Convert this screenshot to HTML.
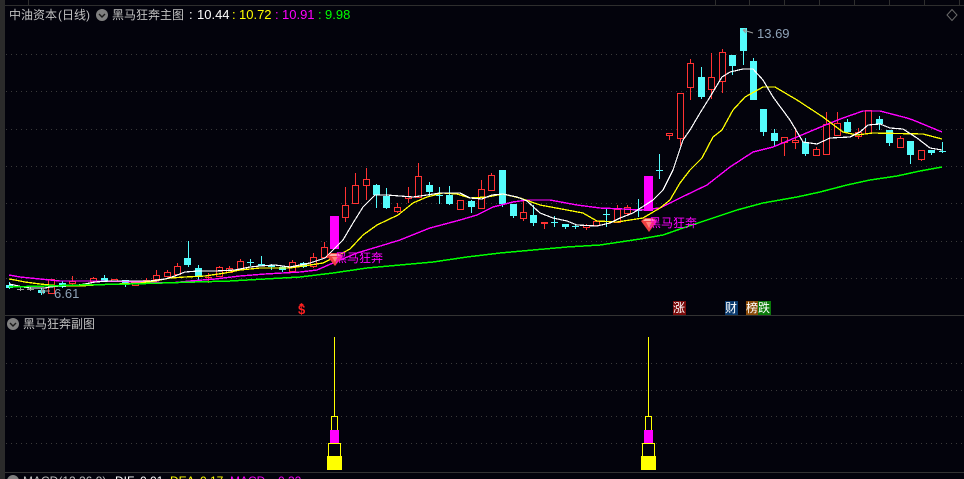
<!DOCTYPE html>
<html><head><meta charset="utf-8"><style>
html,body{margin:0;padding:0;background:#03030c;width:964px;height:479px;overflow:hidden}
svg{display:block}
text{font-family:"Liberation Sans","Noto Sans CJK SC",sans-serif;font-size:12px}
.n{font-size:13px}
</style></head><body>
<svg width="964" height="479" viewBox="0 0 964 479" xmlns="http://www.w3.org/2000/svg">
<rect width="964" height="479" fill="#03030c"/>
<rect width="5" height="479" fill="#2b2b2b"/>
<g shape-rendering="crispEdges">
<rect x="5" y="5" width="959" height="1" fill="#2e2e2e"/>
<rect x="5" y="315" width="959" height="1" fill="#333"/>
<rect x="5" y="472" width="959" height="1" fill="#333"/>
<path d="M28.5 0V5M715.5 0V5M749.5 0V5M784.5 0V5M819.5 0V5M854.5 0V5M889.5 0V5M924.5 0V5M959.5 0V5" stroke="#2e2e2e"/>
<path d="M6 54.5H964M6 91.5H964M6 129.5H964M6 166.5H964M6 203.5H964M6 241.5H964M6 278.5H964M6 363.5H964M6 390.5H964M6 416.5H964M6 443.5H964" stroke="#3a3a3a" stroke-dasharray="1 4"/>

<!-- red wicks -->
<path stroke="#ff3232" fill="none" d="M72.5 276V285M93.5 277V282M146.5 278V284M156.5 270V280M167.5 270V277M177.5 263V275M208.5 273V283M205 277.5H212M219.5 266V277M229.5 266V273M240.5 259V270M292.5 260V272M313.5 253V268M324.5 242V258M345.5 187V222M355.5 173V204M366.5 168V200M397.5 203V213M408.5 187V203M418.5 163V198M481.5 180V209M491.5 173V191M523.5 200V221M544.5 222V229M586.5 224V230M596.5 220V226M617.5 205V223M627.5 205V216M669.5 133V140M680.5 93V146M690.5 59V100M711.5 53V99M722.5 49V93M784.5 137V156M795.5 128V149M816.5 147V156M826.5 112V155M837.5 112V136M858.5 128V139M868.5 110V134M900.5 136V148M921.5 150V161"/>
<!-- red bodies -->
<g fill="#03030c" stroke="#ff3232">
<rect x="48.5" y="279.5" width="6" height="14"/><rect x="69.5" y="281.5" width="6" height="2"/><rect x="90.5" y="278.5" width="6" height="3"/><rect x="111.5" y="279.5" width="6" height="2"/><rect x="132.5" y="282.5" width="6" height="3"/><rect x="143.5" y="280.5" width="6" height="3"/><rect x="153.5" y="275.5" width="6" height="4"/><rect x="164.5" y="272.5" width="6" height="4"/><rect x="174.5" y="266.5" width="6" height="8"/><rect x="216.5" y="267.5" width="6" height="9"/><rect x="226.5" y="268.5" width="6" height="4"/><rect x="237.5" y="261.5" width="6" height="8"/><rect x="289.5" y="262.5" width="6" height="9"/><rect x="310.5" y="257.5" width="6" height="9"/><rect x="321.5" y="247.5" width="6" height="10"/><rect x="342.5" y="205.5" width="6" height="12"/><rect x="352.5" y="185.5" width="6" height="18"/><rect x="363.5" y="179.5" width="6" height="6"/><rect x="394.5" y="207.5" width="6" height="4"/><rect x="405.5" y="196.5" width="6" height="2"/><rect x="415.5" y="176.5" width="6" height="21"/><rect x="457.5" y="200.5" width="6" height="9"/><rect x="478.5" y="189.5" width="6" height="19"/><rect x="488.5" y="175.5" width="6" height="15"/><rect x="520.5" y="212.5" width="6" height="6"/><rect x="541.5" y="222.5" width="6" height="1"/><rect x="583.5" y="225.5" width="6" height="2"/><rect x="593.5" y="221.5" width="6" height="4"/><rect x="614.5" y="209.5" width="6" height="13"/><rect x="624.5" y="207.5" width="6" height="6"/><rect x="666.5" y="133.5" width="6" height="2"/><rect x="677.5" y="93.5" width="6" height="45"/><rect x="687.5" y="63.5" width="6" height="24"/><rect x="708.5" y="77.5" width="6" height="12"/><rect x="719.5" y="52.5" width="6" height="29"/><rect x="781.5" y="137.5" width="6" height="5"/><rect x="792.5" y="140.5" width="6" height="2"/><rect x="813.5" y="149.5" width="6" height="6"/><rect x="823.5" y="124.5" width="6" height="30"/><rect x="834.5" y="123.5" width="6" height="12"/><rect x="855.5" y="132.5" width="6" height="4"/><rect x="865.5" y="110.5" width="6" height="23"/><rect x="897.5" y="138.5" width="6" height="9"/><rect x="918.5" y="150.5" width="6" height="9"/>
</g>
<!-- cyan wicks -->
<path stroke="#54fcfc" fill="none" d="M9.5 282V289M41.5 288V295M62.5 281V288M104.5 275V281M125.5 280V287M188.5 241V267M198.5 265V280M250.5 259V266M247 262.5H254M261.5 256V266M271.5 264V270M282.5 266V272M303.5 262V268M376.5 184V208M386.5 188V209M429.5 182V196M439.5 187V204M436 195.5H443M449.5 186V205M471.5 200V213M502.5 170V207M513.5 204V218M533.5 205V226M554.5 216V227M551 222.5H558M565.5 224V229M575.5 224V229M572 226.5H579M606.5 209V227M603 214.5H610M638.5 199V217M635 210.5H642M659.5 154V179M656 170.5H663M701.5 67V99M732.5 55V75M743.5 28V65M753.5 58V100M763.5 109V136M774.5 129V147M805.5 138V156M847.5 119V133M879.5 116V130M889.5 130V146M910.5 141V164M931.5 150V155M942.5 142V153M939 151.5H946"/>
<path stroke="#9a9a9a" fill="none" d="M20.5 287V291M17 289.5H24M30.5 287V291M27 289.5H34"/>
<!-- cyan bodies -->
<g fill="#54fcfc">
<rect x="6" y="285" width="7" height="3"/><rect x="38" y="290" width="7" height="3"/><rect x="59" y="283" width="7" height="4"/><rect x="101" y="278" width="7" height="3"/><rect x="122" y="280" width="7" height="3"/><rect x="184" y="258" width="7" height="7"/><rect x="195" y="268" width="7" height="8"/><rect x="258" y="264" width="7" height="2"/><rect x="268" y="265" width="7" height="2"/><rect x="279" y="267" width="7" height="3"/><rect x="300" y="263" width="7" height="4"/><rect x="373" y="185" width="7" height="10"/><rect x="383" y="196" width="7" height="12"/><rect x="426" y="185" width="7" height="7"/><rect x="446" y="195" width="7" height="9"/><rect x="468" y="201" width="7" height="6"/><rect x="499" y="170" width="7" height="34"/><rect x="510" y="204" width="7" height="12"/><rect x="530" y="215" width="7" height="8"/><rect x="562" y="224" width="7" height="3"/><rect x="698" y="77" width="7" height="20"/><rect x="729" y="55" width="7" height="11"/><rect x="740" y="28" width="7" height="23"/><rect x="750" y="61" width="7" height="39"/><rect x="760" y="109" width="7" height="23"/><rect x="771" y="133" width="7" height="8"/><rect x="802" y="142" width="7" height="12"/><rect x="844" y="122" width="7" height="10"/><rect x="876" y="119" width="7" height="5"/><rect x="886" y="130" width="7" height="13"/><rect x="907" y="141" width="7" height="14"/><rect x="928" y="150" width="7" height="3"/>
</g>
<!-- magenta signal bars -->
<rect x="330" y="216" width="9" height="33" fill="#ff00ff"/>
<rect x="644" y="176" width="9" height="35" fill="#ff00ff"/>
<!-- moving averages -->
<polyline fill="none" stroke="#ff00ff" stroke-width="1.4" points="9,275 20,277 40,279 60,281 100,281 150,282 170,283 190,281 215,279 240,276 265,274 300,272 317,270 333,263 357,253 377,247 400,240 430,228 460,220 477,215 493,207 513,202 527,200 550,200 577,205 600,208 623,209 640,210 660,208 680,198 707,185 730,167 753,152 773,147 797,137 823,126 843,118 863,111 880,111 907,118 913,120 942,132"/>
<polyline fill="none" stroke="#ffff00" stroke-width="1.3" points="9,279 15,280 25,282 40,284 60,286 80,286 95,285 140,283 155,281 170,278 185,277 205,276 225,273 240,270 260,268 290,268 310,265 323,263 335,257 350,249 363,235 377,225 398,215 413,203 427,197 443,193 457,194 470,198 487,197 503,194 520,198 540,205 567,210 583,213 597,221 617,222 630,220 643,218 660,208 670,200 680,183 690,170 702,158 713,137 722,130 733,110 745,97 763,87 775,87 797,100 823,117 843,132 857,135 873,133 923,134 942,139"/>
<polyline fill="none" stroke="#ffffff" stroke-width="1.2" points="9,284 14,285 23,287 30,288 45,288 50,287 60,286 78,285 85,284 95,282 110,281 125,281 150,281 165,279 175,276 185,272 198,271 215,271 235,270 250,267 260,266 275,265 290,267 310,263 325,258 333,250 343,240 353,223 363,207 375,195 387,195 400,196 413,197 427,195 440,193 460,193 470,198 482,199 492,195 503,194 517,197 527,201 540,213 553,218 567,221 577,225 597,226 610,223 620,218 633,213 653,200 663,190 673,170 683,140 690,130 700,113 710,97 722,77 730,72 743,69 753,69 763,80 773,97 790,120 803,142 817,144 830,138 850,137 860,132 868,125 880,124 890,128 903,129 917,138 930,148 942,150"/>
<polyline fill="none" stroke="#00ff00" stroke-width="1.5" points="9,287 80,285 130,284 195,282 230,281 300,277 333,273 367,268 400,265 433,262 467,257 500,253 533,250 567,247 600,245 640,239 663,235 683,228 707,220 737,210 763,203 797,197 820,192 847,185 870,180 897,176 920,171 942,167"/>

<!-- sub chart -->
<g>
<rect x="334" y="337" width="1" height="79" fill="#ffff00"/>
<rect x="331.5" y="416.5" width="6" height="14" fill="#03030c" stroke="#ffff00"/>
<rect x="330" y="430" width="9" height="14" fill="#ff00ff"/>
<rect x="328.5" y="443.5" width="12" height="13" fill="#03030c" stroke="#ffff00"/>
<rect x="327" y="456" width="15" height="14" fill="#ffff00"/>
<rect x="648" y="337" width="1" height="79" fill="#ffff00"/>
<rect x="645.5" y="416.5" width="6" height="14" fill="#03030c" stroke="#ffff00"/>
<rect x="644" y="430" width="9" height="14" fill="#ff00ff"/>
<rect x="642.5" y="443.5" width="12" height="13" fill="#03030c" stroke="#ffff00"/>
<rect x="641" y="456" width="15" height="14" fill="#ffff00"/>
</g>

<!-- tag backgrounds -->
<rect x="673" y="301" width="13" height="14" fill="#7a0a0a"/>
<rect x="725" y="301" width="13" height="14" fill="#0a3a6e"/>
<rect x="746" y="301" width="13" height="14" fill="#8a4a08"/>
<rect x="758" y="301" width="13" height="14" fill="#0a7a0a"/>
</g>

<!-- gems -->
<polygon points="327,256 331,253 339,253 343,256 335,266" fill="#ee4040"/>
<polygon points="331,254 339,254 341,256 329,256" fill="#ffb0a8"/>
<polygon points="332,257 338,257 335,262" fill="#ff8478"/>
<polygon points="641,221 645,218 653,218 657,221 649,232" fill="#ee4040"/>
<polygon points="645,219 653,219 655,221 643,221" fill="#ffb0a8"/>
<polygon points="646,222 652,222 649,228" fill="#ff8478"/>

<text x="335" y="262" fill="#ff00ff">黑马狂奔</text>
<text x="649" y="227" fill="#ff00ff">黑马狂奔</text>

<!-- header -->
<text x="9" y="19" fill="#c0c0c0">中油资本</text>
<text x="58" y="19" fill="#c0c0c0">(日线)</text>
<circle cx="102" cy="15" r="6" fill="#808080"/>
<path d="M99 14l3 3 3-3" stroke="#1a1a1a" stroke-width="1.4" fill="none"/>
<text x="112" y="19" fill="#c0c0c0">黑马狂奔主图</text>
<text class="n" x="189" y="19" fill="#fff">:</text><text class="n" x="197" y="19" fill="#fff">10.44</text>
<text class="n" x="232" y="19" fill="#ffff00">:</text><text class="n" x="239" y="19" fill="#ffff00">10.72</text>
<text class="n" x="275" y="19" fill="#ff00ff">:</text><text class="n" x="282" y="19" fill="#ff00ff">10.91</text>
<text class="n" x="318" y="19" fill="#00ff00">:</text><text class="n" x="325" y="19" fill="#00ff00">9.98</text>

<path d="M947 15l5-5.500 5 5.500-5 5.500z" fill="none" stroke="#6a6a6a"/>

<!-- hi/lo labels -->
<path d="M743 30l3-1M743 30l3 3M743 30l10 3" stroke="#9a9a9a" fill="none"/>
<text class="n" x="757" y="38" fill="#8fa3b8">13.69</text>
<path d="M41 291l3-2M41 291l3 3M41 291h9" stroke="#9a9a9a" fill="none"/>
<text class="n" x="54" y="298" fill="#8fa3b8">6.61</text>

<!-- tags -->
<text x="298" y="314" fill="#ff2020" font-weight="bold" style="font-size:13px">$</text>
<polygon points="299,305 301.500,303 304,305" fill="#ff2020"/>
<text x="673" y="312" fill="#fff">涨</text>
<text x="725" y="312" fill="#fff">财</text>
<text x="746" y="312" fill="#fff">榜</text>
<text x="758" y="312" fill="#fff">跌</text>

<!-- sub header -->
<circle cx="13" cy="324" r="6" fill="#808080"/>
<path d="M10 323l3 3 3-3" stroke="#1a1a1a" stroke-width="1.4" fill="none"/>
<text x="23" y="328" fill="#c0c0c0">黑马狂奔副图</text>

<!-- bottom header -->
<circle cx="13" cy="481" r="6" fill="#808080"/>
<text x="23" y="485" fill="#c0c0c0">MACD(12,26,9)</text>
<text x="115" y="485" fill="#fff">DIF</text><text x="136" y="485" fill="#fff">-0.01</text>
<text x="170" y="485" fill="#ffff00">DEA</text><text x="196" y="485" fill="#ffff00">-0.17</text>
<text x="230" y="485" fill="#ff00ff">MACD</text><text x="274" y="485" fill="#ff00ff">-0.32</text>
</svg>
</body></html>
